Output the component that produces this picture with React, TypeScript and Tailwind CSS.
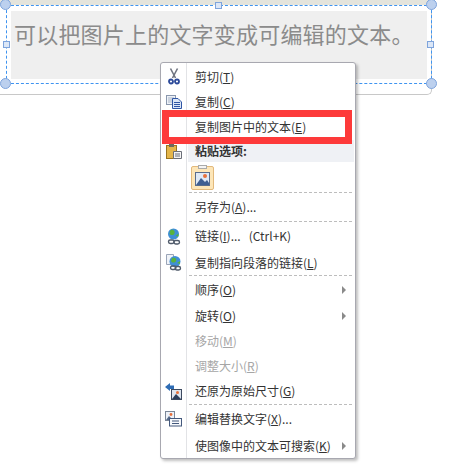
import React from "react";

const Scissors = () => (
  <svg width="12" height="17" viewBox="0 0 12 17" fill="none">
    <path d="M2.5 0.5 L7.5 10 M9.5 0.5 L4.5 10" stroke="#6f7480" strokeWidth="1.6" />
    <circle cx="3" cy="13.5" r="2" stroke="#2c4a9a" strokeWidth="1.8" />
    <circle cx="9" cy="13.5" r="2" stroke="#2c4a9a" strokeWidth="1.8" />
  </svg>
);
const Copy = () => (
  <svg width="16" height="14" viewBox="0 0 16 14">
    <rect x="0.5" y="0.5" width="9" height="9" fill="#eef2f8" stroke="#8a97ad" />
    <path d="M2 3 H8 M2 5 H6 M2 7 H6" stroke="#a9b4c6" />
    <path d="M6.5 3.5 H12 L15.5 7 V13.5 H6.5 Z" fill="#dbe6f6" stroke="#2f55a4" />
    <path d="M8 7.5 H14 M8 9.5 H14 M8 11.5 H14" stroke="#2f55a4" />
  </svg>
);
const Paste = () => (
  <svg width="16" height="15" viewBox="0 0 16 15">
    <rect x="0.5" y="1.5" width="10" height="13" fill="#e5b64a" stroke="#9a7420" />
    <rect x="3" y="0" width="5" height="3" fill="#6d6a5e" />
    <path d="M7.5 7.5 H15.5 V14.5 H7.5 Z" fill="#f5f5f5" stroke="#6b6f78" />
    <path d="M9 10 H14 M9 12 H14" stroke="#6b6f78" />
  </svg>
);
const PicturePaste = () => (
  <div className="w-[23px] h-[24px] bg-[#fde6b8] border border-[#e2b97c] rounded-[2px] flex items-center justify-center relative">
    <div className="absolute -top-[2px] left-[6px] w-[9px] h-[4px] bg-[#f4f4f4] border border-[#aaa]" />
    <svg width="15" height="14" viewBox="0 0 15 14" className="mt-[2px]">
      <rect x="0.5" y="0.5" width="14" height="13" fill="#dfe9f6" stroke="#5a6d8c" />
      <circle cx="10" cy="4" r="2" fill="#e8703a" />
      <path d="M1 13 L6 6 L10 10 L12 8 L14 11 V13 Z" fill="#3f5f92" />
    </svg>
  </div>
);
const Globe = ({ doc }: { doc?: boolean }) => (
  <svg width="16" height="17" viewBox="0 0 16 17" fill="none">
    {doc && <path d="M0.5 0.5 H7.5 V10.5 H0.5 Z" fill="#f0f3f8" stroke="#9aa5b8" />}
    <circle cx={doc ? 9 : 7.5} cy={doc ? 7.5 : 6} r="5.5" fill="#3f8fd6" />
    <path d={doc ? "M6 4 C9 3 11 5 10 7 C9 9 6 9 5 7 Z M11 9 L14 7 L14 10 Z" : "M4.5 2 C7.5 1 9.5 3.5 8.5 5.5 C7.5 7.5 4.5 7.5 3.5 5.5 Z M9.5 8 L12.5 5.5 L12.5 8.5 Z"} fill="#58b33c" />
    <rect x={doc ? 4.5 : 2.5} y="12" width="5.5" height="3.5" rx="1.7" stroke="#4f5a6a" strokeWidth="1.4" />
    <rect x={doc ? 9 : 8} y="12.5" width="5.5" height="3.5" rx="1.7" stroke="#4f5a6a" strokeWidth="1.4" />
  </svg>
);
const Restore = () => (
  <svg width="17" height="17" viewBox="0 0 17 17">
    <path d="M0 4 L5 0 V2.5 H9 V6 H5 V8 Z" fill="#2f6db5" />
    <rect x="6.5" y="6.5" width="10" height="10" fill="#dfe6f0" stroke="#3c4a60" />
    <circle cx="12.5" cy="9.5" r="1.5" fill="#e8703a" />
    <path d="M7 16 L11 11 L13 13 L16 16 Z" fill="#2c3e5c" />
  </svg>
);
const AltText = () => (
  <svg width="17" height="16" viewBox="0 0 17 16">
    <rect x="0.5" y="0.5" width="9" height="9" fill="#eef2f8" stroke="#7c8798" />
    <circle cx="6" cy="3.5" r="1.4" fill="#e8703a" />
    <path d="M1 9 L4 5 L8 9 Z" fill="#55698a" />
    <rect x="4.5" y="7.5" width="12" height="7.5" fill="#f7f9fc" stroke="#44597d" />
    <path d="M7 10 H14 M7 12.5 H14" stroke="#44597d" />
  </svg>
);
const Arrow = () => <span className="w-0 h-0 border-y-[4px] border-y-transparent border-l-[4px] border-l-[#8a8a8a]" />;

const Item = ({ icon, label, disabled, arrow, h = "h-[25px]" }: { icon?: React.ReactNode; label: React.ReactNode; disabled?: boolean; arrow?: boolean; h?: string }) => (
  <div className={`flex items-center ${h} ${disabled ? "text-[#a6a6a6]" : "text-[#333333]"}`}>
    <div className="w-[25px] flex justify-center shrink-0">{icon}</div>
    <div className="pl-[9px] flex-1 whitespace-nowrap">{label}</div>
    {arrow && <div className="mr-[9px] flex"><Arrow /></div>}
  </div>
);
const Sep = () => <div className="ml-[28px] mr-[3px] border-t border-dashed border-[#bdbdbd]" />;
const U = ({ c }: { c: string }) => <span className="underline">{c}</span>;

export default function App() {
  return (
    <div className="relative w-[476px] h-[470px] bg-white overflow-hidden font-['Noto_Sans_CJK_SC','Liberation_Sans',sans-serif] text-[12px]">
      <div className="absolute left-0 top-0 w-[432px] h-[95px] bg-white border-r border-b border-[#c8c8c8] rounded-br-[5px]" />
      <div className="absolute left-0 top-0 w-[431px] h-[5px] bg-[#e4e4dc]" />
      <div className="absolute left-[11px] top-[11px] w-[416px] h-[68px] bg-[#efefef] pl-[3px] pt-[5px] text-[22px] leading-[34px] text-[#8b8b8b] tracking-[0.2px] whitespace-nowrap">
        可以把图片上的文字变成可编辑的文本。
      </div>
      <div className="absolute left-[6px] top-[5px] w-[426px] h-[79px] border border-dashed border-[#3f94f0]" />
      {[
        [0, -1], [426, -1], [0, 78], [426, 78],
      ].map(([x, y], i) => (
        <div key={i} className="absolute w-[11px] h-[11px] rounded-full bg-[#bcd0ee] border border-[#7ea4dc]" style={{ left: x, top: y }} />
      ))}
      {[
        [215, 2], [3, 41], [427, 41],
      ].map(([x, y], i) => (
        <div key={i} className="absolute w-[7px] h-[7px] bg-[#dce7f7] border border-[#7ea4dc]" style={{ left: x, top: y }} />
      ))}

      <div className="absolute left-[160px] top-[62px] w-[196px] h-[397px] bg-white border border-[#a8a8b0] rounded-[3px] shadow-[2px_2px_3px_rgba(0,0,0,0.25)] pt-[1px]">
        <div className="absolute left-[25px] top-0 bottom-0 border-l border-[#e2e3e6]" />
        <div className="relative">
          <Item icon={<Scissors />} label={<>剪切(<U c="T" />)</>} />
          <Item icon={<Copy />} label={<>复制(<U c="C" />)</>} />
          <Item label={<>复制图片中的文本(<U c="E" />)</>} />
          <div className="flex items-center h-[22px] mt-[1px] mb-[2px] font-bold text-[#333333]">
            <div className="w-[25px] flex justify-center shrink-0"><Paste /></div>
            <div className="ml-[2px] pl-[7px] flex-1 self-stretch flex items-center bg-[#eff1f5] mr-[1px]">粘贴选项:</div>
          </div>
          <div className="h-[28px] pl-[30px] pt-[2px]"><PicturePaste /></div>
          <Sep />
          <Item label={<>另存为(<U c="A" />)...</>} h="h-[28px]" />
          <Sep />
          <Item icon={<Globe />} label={<>链接(<U c="I" />)...&nbsp;&nbsp;&nbsp;(Ctrl+K)</>} h="h-[28px]" />
          <Item icon={<Globe doc />} label={<>复制指向段落的链接(<U c="L" />)</>} />
          <Sep />
          <Item label={<>顺序(<U c="O" />)</>} arrow h="h-[28px]" />
          <Item label={<>旋转(<U c="O" />)</>} arrow h="h-[24px]" />
          <Item label={<>移动(<U c="M" />)</>} disabled />
          <Item label={<>调整大小(<U c="R" />)</>} disabled />
          <Item icon={<Restore />} label={<>还原为原始尺寸(<U c="G" />)</>} h="h-[26px]" />
          <Sep />
          <Item icon={<AltText />} label={<>编辑替换文字(<U c="X" />)...</>} h="h-[28px]" />
          <Item label={<>使图像中的文本可搜索(<U c="K" />)</>} arrow />
        </div>
      </div>

      <div className="absolute left-[162px] top-[110px] w-[190px] h-[34px] border-[7px] border-[#fd3a3a]" />
    </div>
  );
}
